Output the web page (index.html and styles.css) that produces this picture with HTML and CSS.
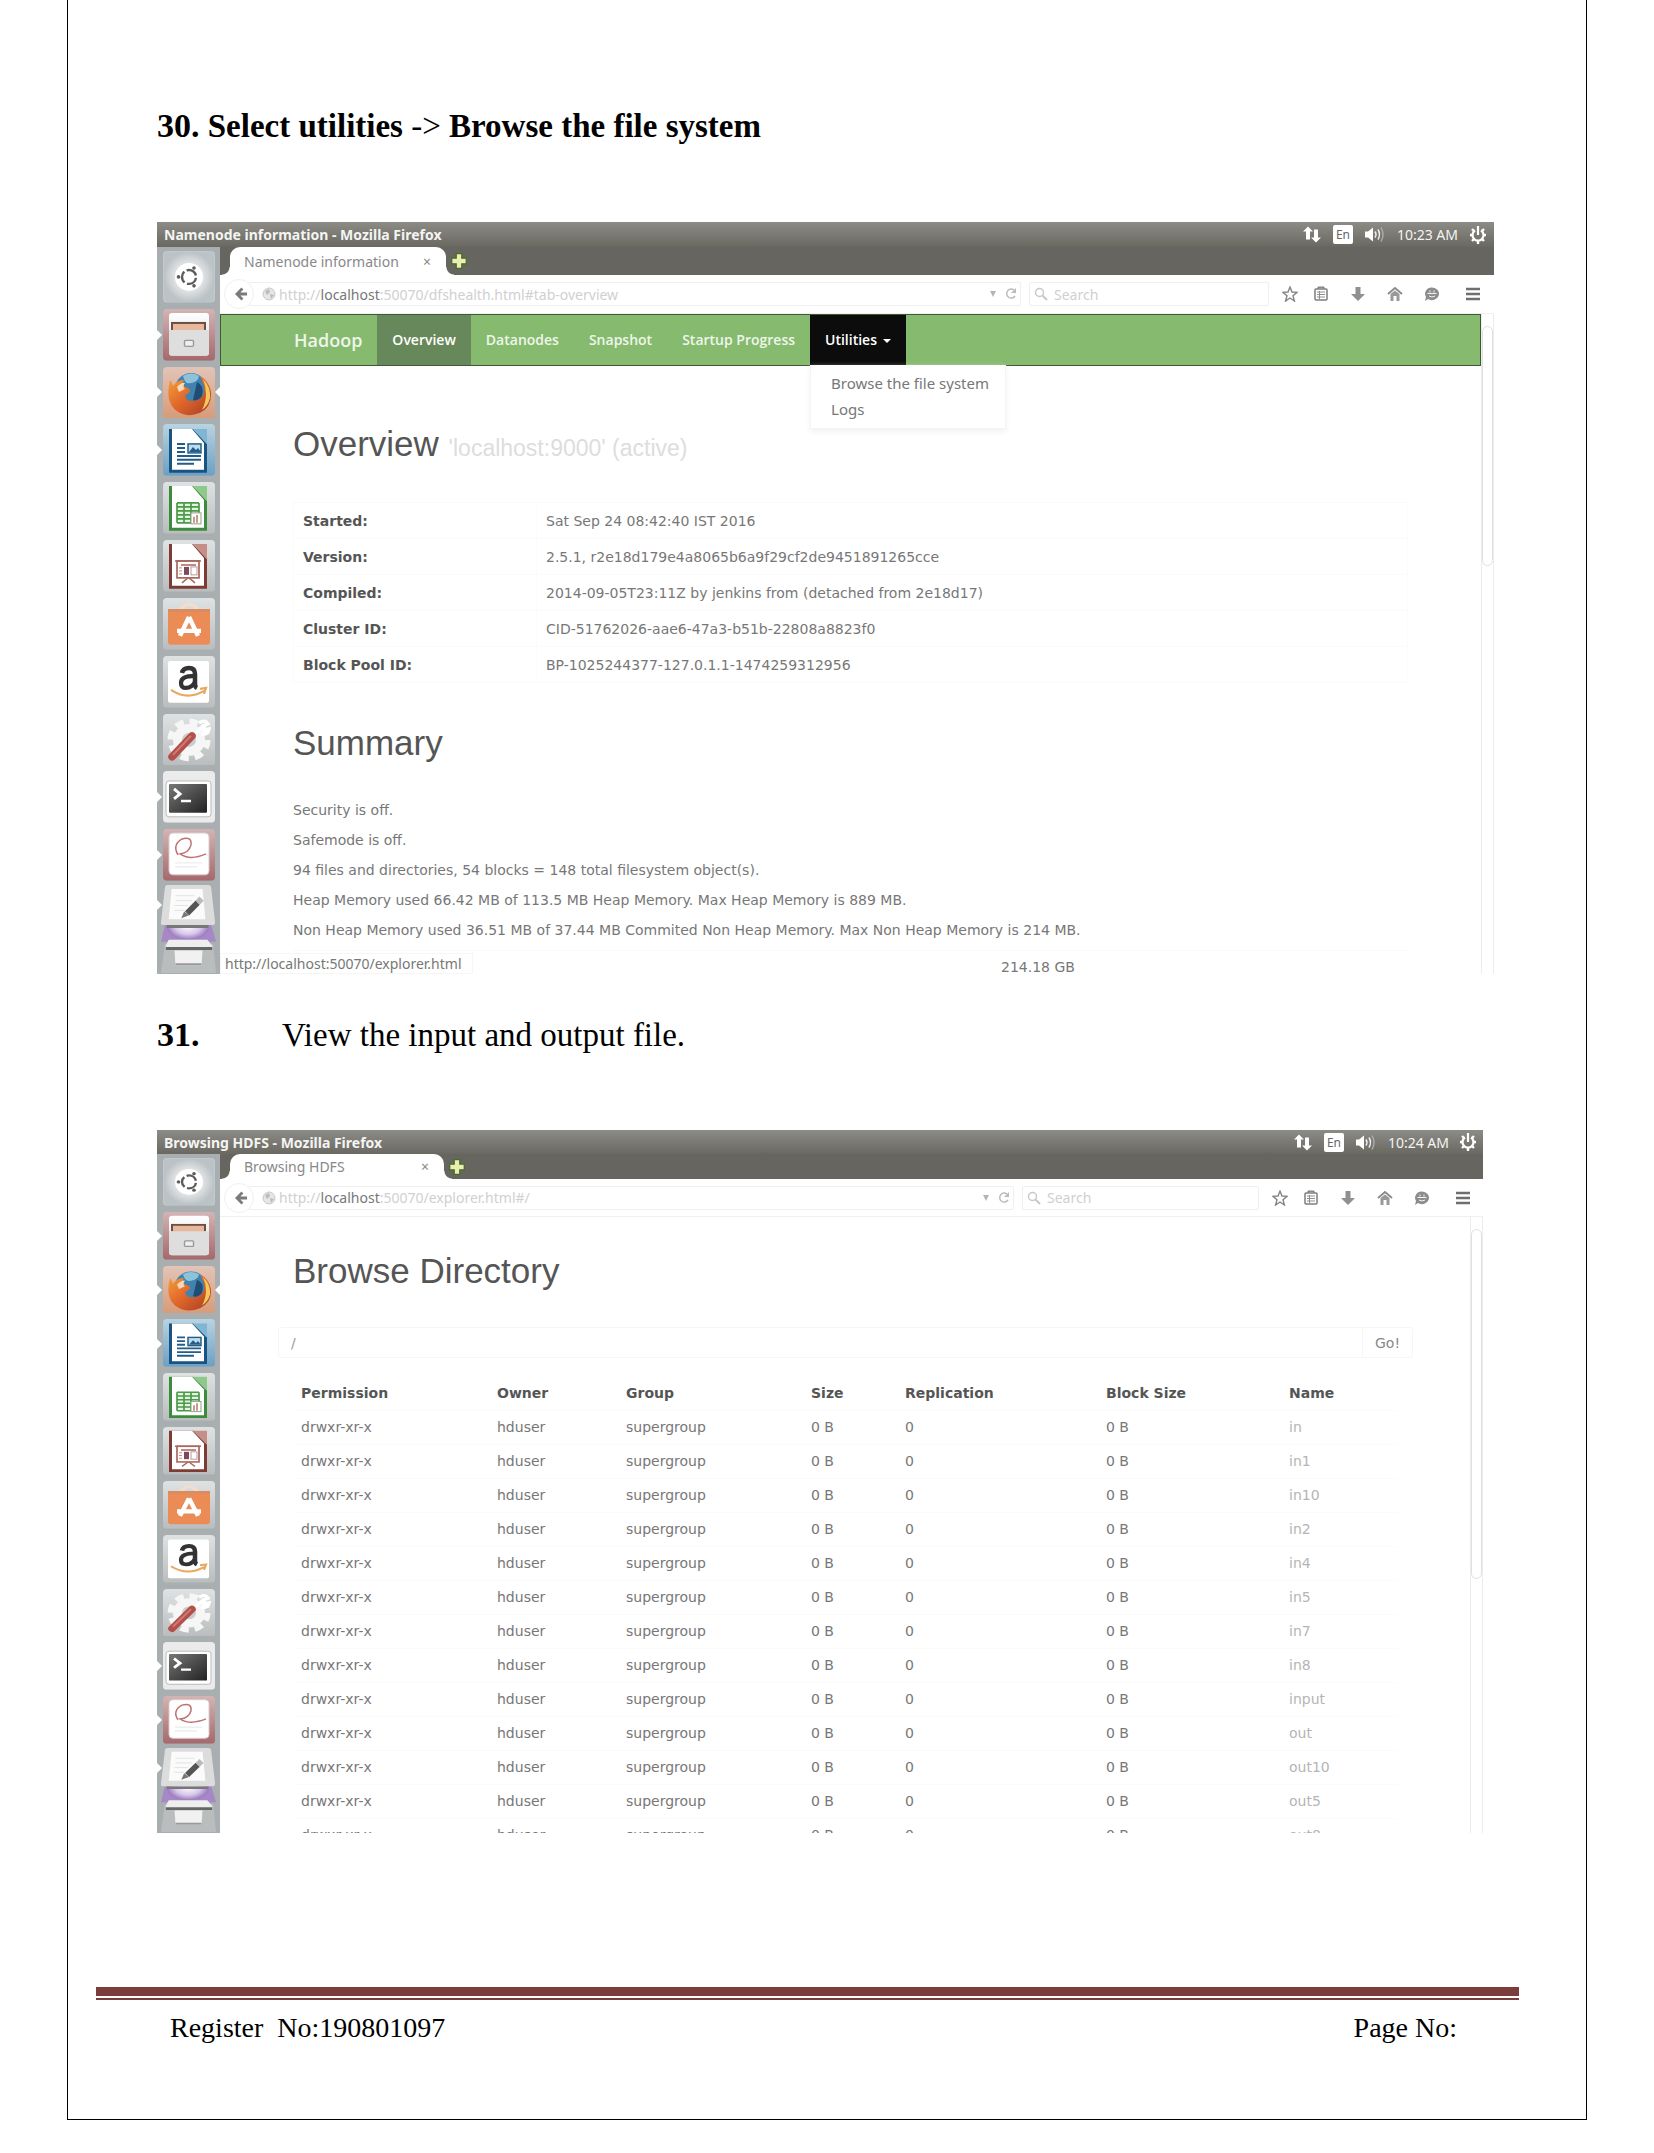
FILE: index.html
```html
<!DOCTYPE html>
<html lang="en">
<head>
<meta charset="utf-8">
<meta name="viewport" content="width=device-width, initial-scale=1">
<title>Hadoop lab record</title>
<link rel="stylesheet" href="styles.css">
</head>
<body>
<svg class="defs" aria-hidden="true">
  <defs>
    <linearGradient id="g-tile" x1="0" y1="0" x2="0" y2="1"><stop offset="0" stop-color="#dfe2e3"/><stop offset="1" stop-color="#b9bdbe"/></linearGradient>
    <radialGradient id="g-dash"><stop offset="0" stop-color="#ffffff"/><stop offset=".6" stop-color="#dde0e1"/><stop offset="1" stop-color="#bcc3c6"/></radialGradient>
    <linearGradient id="g-red" x1="0" y1="0" x2="0" y2="1"><stop offset="0" stop-color="#d3b4b4"/><stop offset="1" stop-color="#a5686b"/></linearGradient>
    <linearGradient id="g-fox" x1="0" y1="0" x2="0" y2="1"><stop offset="0" stop-color="#e2c4b8"/><stop offset="1" stop-color="#d79b78"/></linearGradient>
    <linearGradient id="g-body" x1="0" y1="0" x2="1" y2="1"><stop offset="0" stop-color="#f3a33c"/><stop offset=".45" stop-color="#e36a2c"/><stop offset="1" stop-color="#a63c24"/></linearGradient>
    <linearGradient id="g-blue" x1="0" y1="0" x2="0" y2="1"><stop offset="0" stop-color="#b9d3e0"/><stop offset="1" stop-color="#6ba0c4"/></linearGradient>
    <linearGradient id="g-paper" x1="0" y1="0" x2="0" y2="1"><stop offset="0" stop-color="#ffffff"/><stop offset="1" stop-color="#d6d6d6"/></linearGradient>
    <linearGradient id="g-term" x1="0" y1="0" x2="1" y2="1"><stop offset="0" stop-color="#777"/><stop offset="1" stop-color="#222"/></linearGradient>
    <radialGradient id="g-purple"><stop offset="0" stop-color="#ffffff"/><stop offset=".6" stop-color="#d8c8ea"/><stop offset="1" stop-color="#9a78bd"/></radialGradient>
  </defs>

  <symbol id="app-dash" viewBox="0 0 52 52" preserveAspectRatio="none">
    <rect width="52" height="52" rx="4" fill="#c2c9cc"/><rect x="1" y="1" width="50" height="50" rx="4" fill="url(#g-dash)"/>
    <circle cx="26" cy="26" r="14" fill="#fff"/>
    <circle cx="26" cy="26" r="7" fill="none" stroke="#5c5c5c" stroke-width="2.4" stroke-dasharray="12 2.66" stroke-dashoffset="-1"/>
    <circle cx="15.500" cy="26" r="1.800" fill="#5c5c5c"/><circle cx="31" cy="17" r="1.800" fill="#5c5c5c"/><circle cx="31" cy="35" r="1.800" fill="#5c5c5c"/>
  </symbol>
  <symbol id="app-files" viewBox="0 0 52 52" preserveAspectRatio="none">
    <rect width="52" height="52" rx="4" fill="url(#g-red)"/>
    <rect x="6" y="4" width="40" height="43" rx="3" fill="url(#g-paper)"/>
    <rect x="8" y="13" width="35" height="8" fill="#6b5045"/><rect x="10" y="15" width="31" height="7" fill="#e8b89c"/>
    <path d="M6 21h40v23q0 3-3 3H9q-3 0-3-3z" fill="#dedede"/>
    <rect x="21.500" y="31.500" width="9" height="6" rx="1" fill="#eee" stroke="#999" stroke-width="1.400"/>
  </symbol>
  <symbol id="app-firefox" viewBox="0 0 52 52" preserveAspectRatio="none">
    <rect width="52" height="52" rx="4" fill="url(#g-fox)"/>
    <circle cx="28" cy="22" r="16" fill="#3f83ae"/><path d="M20 9q8-5 16 0q-1 6-8 7q-6 2-8-7z" fill="#8dc3da"/>
    <path d="M34 15q8 4 5 14q-4 6-9 4z" fill="#214c73"/>
    <path d="M7 13q2 2 3 6q4-6 11-6q-3 4 1 7q5 1 5 4q-1 3-5 4q1 7 9 6q8-1 10-8q1-6-1-10q-2-5-3-7q9 5 11 16q1 15-11 21q-14 6-25-3Q2 34 7 13z" fill="url(#g-body)"/>
    <path d="M40 12q8 8 7 19q-2 8-8 12q4-8 4-16q0-8-3-15z" fill="#f4c95a"/>
    <path d="M14 20q5-5 8-4q-3 4 0 6l-6 3z" fill="#f7d9b8"/>
  </symbol>
  <symbol id="app-writer" viewBox="0 0 52 52" preserveAspectRatio="none">
    <rect width="52" height="52" rx="4" fill="url(#g-blue)"/>
    <path d="M6 5h24l14 15v29H6z" fill="#195382"/><path d="M30 5h14v15z" fill="#7fb6d3"/>
    <path d="M9 5h20l12 14v27H9z" fill="#fff"/>
    <path d="M14 20h8M14 24h8M14 28h8M14 32h24M14 36h24M14 40h17" stroke="#225d89" stroke-width="2"/>
    <rect x="25" y="20" width="13" height="9" fill="#bfdcec" stroke="#225d89" stroke-width="1.500"/><path d="M26 28l4-5 3 3 2-2 3 4z" fill="#225d89"/>
  </symbol>
  <symbol id="app-calc" viewBox="0 0 52 52" preserveAspectRatio="none">
    <rect width="52" height="52" rx="4" fill="url(#g-tile)"/>
    <path d="M6 4h24l14 15v30H6z" fill="#3d8b3c"/><path d="M30 4h14v15z" fill="#8fc98a"/>
    <path d="M9 4h20l12 14v28H9z" fill="#fff"/>
    <rect x="14" y="21" width="22" height="20" fill="#e4f3e1"/>
    <path d="M14 21h22M14 25h22M14 29h22M14 33h22M14 37h22M14 41h22M14 21v20M21 21v20M28 21v20M36 21v20" stroke="#4a9a48" stroke-width="1.700"/>
    <rect x="28" y="31" width="10" height="11" fill="#fff" stroke="#8aa587"/><path d="M31 41v-6M34 41v-8" stroke="#c59a8c" stroke-width="2"/>
  </symbol>
  <symbol id="app-impress" viewBox="0 0 52 52" preserveAspectRatio="none">
    <rect width="52" height="52" rx="4" fill="url(#g-tile)"/>
    <path d="M6 4h24l14 15v30H6z" fill="#7d3b33"/><path d="M30 4h14v15z" fill="#c58f87"/>
    <path d="M9 4h20l12 14v28H9z" fill="#fff"/>
    <rect x="14" y="21" width="22" height="17" fill="#fff" stroke="#a9675c" stroke-width="1.700"/>
    <path d="M12 21h26M18 25h15M25 38l-6 5M26 38l6 5" stroke="#a9675c" stroke-width="1.500"/>
    <rect x="21" y="27" width="5" height="8" fill="#7d4a5a"/><rect x="28" y="27" width="6" height="8" fill="none" stroke="#b99"/><path d="M16 28h3M16 31h3M16 34h3" stroke="#c88b7e"/>
  </symbol>
  <symbol id="app-software" viewBox="0 0 52 52" preserveAspectRatio="none">
    <rect width="52" height="52" rx="4" fill="url(#g-tile)"/>
    <path d="M17 12q9-12 18 0" fill="none" stroke="#f6dccb" stroke-width="3"/>
    <path d="M5 11h42v33q0 3-3 3H8q-3 0-3-3z" fill="#eb8c56"/><path d="M5 11h42v3H5z" fill="#d98c62"/>
    <path d="M26 19L17 38M26 19l9 19M14 33h24" stroke="#fff" stroke-width="4.500" fill="none"/>
  </symbol>
  <symbol id="app-amazon" viewBox="0 0 52 52" preserveAspectRatio="none">
    <rect width="52" height="52" rx="4" fill="url(#g-tile)"/>
    <rect x="5" y="5" width="41" height="42" rx="2" fill="#fff"/>
    <path d="M19 17q1-5 7-5q6 0 6 6v10q0 3 2 4" fill="none" stroke="#333" stroke-width="4.500"/>
    <path d="M32 20q-14 0-14 7q0 5 5 5q6 0 9-6" fill="none" stroke="#333" stroke-width="4.200"/>
    <path d="M8 34q16 11 33 1M37 33l6-1-2 6" fill="none" stroke="#e8a860" stroke-width="2.200"/>
  </symbol>
  <symbol id="app-settings" viewBox="0 0 52 52" preserveAspectRatio="none">
    <rect width="52" height="52" rx="4" fill="url(#g-tile)"/>
    <circle cx="26" cy="26" r="16" fill="#f6f6f6"/>
    <circle cx="26" cy="26" r="18.500" fill="none" stroke="#f6f6f6" stroke-width="6" stroke-dasharray="8.500 6.030"/>
    <circle cx="26" cy="26" r="7" fill="#c9cccd"/>
    <path d="M33 19l6-6M36 9q6-4 9 1l-5 2 1 4 5-1q-1 6-8 5" stroke="#fff" stroke-width="3.500" fill="none"/>
    <path d="M9 43L29 22" stroke="#b4504b" stroke-width="7.500" stroke-linecap="round"/><path d="M10 41L28 22" stroke="#cf7b76" stroke-width="2"/>
  </symbol>
  <symbol id="app-terminal" viewBox="0 0 52 52" preserveAspectRatio="none">
    <rect width="52" height="52" rx="4" fill="#ebebeb"/>
    <rect x="3" y="10" width="45" height="36" rx="3" fill="#fff" stroke="#b9b9b9"/>
    <rect x="6" y="13" width="38" height="29" rx="1" fill="url(#g-term)"/>
    <path d="M11 18l6 5-6 5" fill="none" stroke="#fff" stroke-width="3"/><path d="M18 30h10" stroke="#fff" stroke-width="2.500"/>
  </symbol>
  <symbol id="app-evince" viewBox="0 0 52 52" preserveAspectRatio="none">
    <rect width="52" height="52" rx="4" fill="url(#g-red)"/>
    <rect x="6" y="4" width="40" height="42" rx="4" fill="#fff" stroke="#d9cccc"/>
    <path d="M15 26q-6-10 4-16q10-3 9 6q-2 8-11 9q10 7 26 0" fill="none" stroke="#bf7370" stroke-width="1.500"/>
    <path d="M12 34h27M12 38h22" stroke="#eee" stroke-width="1.500"/>
  </symbol>
  <symbol id="app-stack" viewBox="0 0 58 92" preserveAspectRatio="none">
    <path d="M4 61h50l3 30H0z" fill="#b9bdbe"/>
    <path d="M14 68h29l-1 15H15z" fill="#f1f1f1"/><path d="M15 82h27" stroke="#999" stroke-width="2"/>
    <path d="M4 42h48l5 17H0z" fill="#a688c6"/>
    <ellipse cx="28" cy="43" rx="22" ry="14" fill="url(#g-purple)"/><path d="M6 42h43v3H6z" fill="#777"/>
    <path d="M8 57h40l5 6v3H5v-3z" fill="#eee"/><path d="M5 66h48" stroke="#666" stroke-width="3"/>
    <path d="M7 1h42q3 0 3 3l4 35q0 3-3 3H2q-3 0-2-3L4 4q0-3 3-3z" fill="#dcdcdc"/>
    <path d="M11 5h32l3 31H8z" fill="#fbfbfb"/><path d="M15 12h20M15 17h17M14 22h14M14 27h10" stroke="#e2e2e2"/>
    <path d="M27 30l11-11" stroke="#555" stroke-width="6"/><path d="M38 19l4-4" stroke="#bbb" stroke-width="6"/><path d="M21 35l3-7 5 4z" fill="#777"/>
  </symbol>

  <symbol id="ico-net" viewBox="0 0 18 16"><path d="M5 0L0 5h3v8h4V5h3zM13 16l5-5h-3V3h-4v8H8z" fill="#fff"/></symbol>
  <symbol id="ico-sound" viewBox="0 0 20 16"><path d="M0 5h3l5-4v14l-5-4H0z" fill="#fff"/><path d="M10 5q2 3 0 6M13 3q3 5 0 10" fill="none" stroke="#eee" stroke-width="1.500"/><path d="M16 1q4 7 0 14" fill="none" stroke="#aaa" stroke-width="1.500"/></symbol>
  <symbol id="ico-gear" viewBox="0 0 18 18"><path d="M6 4.500a5.500 5.500 0 1 0 6 0" fill="none" stroke="#fff" stroke-width="2.200"/><path d="M9 0v9" stroke="#fff" stroke-width="2.200"/><path d="M1 9h2M15 9h2M3 3l2 2M15 3l-2 2M3 15l2-2M15 15l-2-2M9 15v3" stroke="#fff" stroke-width="2.400"/></symbol>
  <symbol id="ico-plus" viewBox="0 0 16 16"><path d="M5.500 1.500h5v4h4v5h-4v4h-5v-4h-4v-5h4z" fill="#e9efae" stroke="#4b6b2c" stroke-width="1.200"/></symbol>
  <symbol id="ico-back" viewBox="0 0 14 14"><path d="M13 7H3M8 1L2 7l6 6" fill="none" stroke="#7a7a7a" stroke-width="3"/></symbol>
  <symbol id="ico-globe" viewBox="0 0 14 14"><circle cx="7" cy="7" r="6" fill="#e6e6e6" stroke="#c8c8c8"/><path d="M3 4l4-2 1 3-3 3zM8 7l4 1-3 4z" fill="#bbb"/></symbol>
  <symbol id="ico-reload" viewBox="0 0 12 14"><path d="M10 9a4.500 4.500 0 1 1-1-6" fill="none" stroke="#bbb" stroke-width="1.500"/><path d="M11 1v5H6z" fill="#bbb"/></symbol>
  <symbol id="ico-search" viewBox="0 0 14 14"><circle cx="5.500" cy="5.500" r="4" fill="none" stroke="#c8c8c8" stroke-width="1.500"/><path d="M8.500 8.500L13 13" stroke="#c8c8c8" stroke-width="2"/></symbol>
  <symbol id="ico-star" viewBox="0 0 16 16"><path d="M8 1l2 5 5 .4-4 3.400L12.400 15 8 12l-4.400 3L5 9.800 1 6.400 6 6z" fill="none" stroke="#858585" stroke-width="1.400"/></symbol>
  <symbol id="ico-clip" viewBox="0 0 16 16"><rect x="2" y="3" width="12" height="11" rx="1" fill="none" stroke="#7d7d7d" stroke-width="1.500"/><path d="M5 3V1h6v2" fill="#999" stroke="#7d7d7d"/><path d="M4 6h8M4 8.500h8M4 11h8M6.500 5v8" stroke="#8f8f8f"/></symbol>
  <symbol id="ico-down" viewBox="0 0 16 16"><path d="M5.500 1h5v7H15l-7 7-7-7h4.500z" fill="#909090"/></symbol>
  <symbol id="ico-home" viewBox="0 0 16 16"><path d="M1 8l7-6 7 6" fill="none" stroke="#8a8a8a" stroke-width="1.800"/><path d="M3.500 8L8 4.500 12.500 8v7h-3v-5h-3v5h-3z" fill="#999"/></symbol>
  <symbol id="ico-chat" viewBox="0 0 16 16"><path d="M8 1.500a7 6.300 0 1 1-4 11.500L1 15l1-4A6.500 6.300 0 0 1 8 1.500z" fill="#8c8c8c"/><path d="M3.500 7.500h9M6 4.500v2M10 4.500v2M5 10q3 2 6 0" stroke="#f4f4f4" fill="none"/></symbol>
  <symbol id="ico-menu" viewBox="0 0 16 16"><path d="M1 3h14M1 8h14M1 13h14" stroke="#6f6f6f" stroke-width="2.600"/></symbol>
</svg>

<main class="sheet">
  <h2 class="step"><span class="num">30.</span> Select utilities <span class="thin">-&gt;</span> Browse the file system</h2>

  <section class="shot shot-overview">
    <header class="titlebar">
      <span class="wintitle">Namenode information - Mozilla Firefox</span>
      <svg class="tray net"><use href="#ico-net"/></svg>
      <span class="lang">En</span>
      <svg class="tray sound"><use href="#ico-sound"/></svg>
      <span class="clock">10:23 AM</span>
      <svg class="tray gear"><use href="#ico-gear"/></svg>
    </header>
    <div class="desk">
      <nav class="launcher" aria-label="Launcher">
        <div class="app"><svg><use href="#app-dash"/></svg></div>
        <div class="app open"><svg><use href="#app-files"/></svg></div>
        <div class="app open focus"><svg><use href="#app-firefox"/></svg></div>
        <div class="app open"><svg><use href="#app-writer"/></svg></div>
        <div class="app"><svg><use href="#app-calc"/></svg></div>
        <div class="app"><svg><use href="#app-impress"/></svg></div>
        <div class="app"><svg><use href="#app-software"/></svg></div>
        <div class="app"><svg><use href="#app-amazon"/></svg></div>
        <div class="app"><svg><use href="#app-settings"/></svg></div>
        <div class="app open"><svg><use href="#app-terminal"/></svg></div>
        <div class="app open"><svg><use href="#app-evince"/></svg></div>
        <div class="stack open"><svg><use href="#app-stack"/></svg></div>
      </nav>
      <div class="browser">
        <div class="tabs">
          <div class="tab"><span>Namenode information</span><button class="close" aria-label="Close tab">×</button></div>
          <button class="newtab" aria-label="New tab"><svg><use href="#ico-plus"/></svg></button>
        </div>
        <div class="toolbar">
          <button class="back" aria-label="Back"><svg><use href="#ico-back"/></svg></button>
          <div class="url"><svg class="globe"><use href="#ico-globe"/></svg><span class="addr">http://<b>localhost</b>:50070/dfshealth.html#tab-overview</span><span class="tri"></span><svg class="reload"><use href="#ico-reload"/></svg></div>
          <label class="search"><svg><use href="#ico-search"/></svg><input type="text" placeholder="Search" aria-label="Search"></label>
          <div class="tools">
            <svg><use href="#ico-star"/></svg><svg class="clip"><use href="#ico-clip"/></svg><svg><use href="#ico-down"/></svg><svg><use href="#ico-home"/></svg><svg><use href="#ico-chat"/></svg><svg class="menu"><use href="#ico-menu"/></svg>
          </div>
        </div>
        <div class="view">
          <div class="page">
            <nav class="navbar">
              <a class="brand" href="#">Hadoop</a>
              <a class="active" href="#">Overview</a>
              <a href="#">Datanodes</a>
              <a href="#">Snapshot</a>
              <a href="#">Startup Progress</a>
              <div class="drop">
                <a class="toggle" href="#">Utilities <span class="caret"></span></a>
                <div class="dropmenu"><a href="#">Browse the file system</a><a href="#">Logs</a></div>
              </div>
            </nav>
            <div class="content">
              <h1>Overview <small>'localhost:9000' (active)</small></h1>
              <table class="info">
                <tr><th>Started:</th><td>Sat Sep 24 08:42:40 IST 2016</td></tr>
                <tr><th>Version:</th><td>2.5.1, r2e18d179e4a8065b6a9f29cf2de9451891265cce</td></tr>
                <tr><th>Compiled:</th><td>2014-09-05T23:11Z by jenkins from (detached from 2e18d17)</td></tr>
                <tr><th>Cluster ID:</th><td>CID-51762026-aae6-47a3-b51b-22808a8823f0</td></tr>
                <tr><th>Block Pool ID:</th><td>BP-1025244377-127.0.1.1-1474259312956</td></tr>
              </table>
              <h1>Summary</h1>
              <p>Security is off.</p>
              <p>Safemode is off.</p>
              <p>94 files and directories, 54 blocks = 148 total filesystem object(s).</p>
              <p>Heap Memory used 66.42 MB of 113.5 MB Heap Memory. Max Heap Memory is 889 MB.</p>
              <p>Non Heap Memory used 36.51 MB of 37.44 MB Commited Non Heap Memory. Max Non Heap Memory is 214 MB.</p>
              <div class="capacity"><span>214.18 GB</span></div>
            </div>
            <div class="status">http://localhost:50070/explorer.html</div>
          </div>
          <div class="scroll"><i></i></div>
        </div>
      </div>
    </div>
  </section>

  <h2 class="step second"><span class="num">31.</span><span class="plain">View the input and output file.</span></h2>

  <section class="shot shot-browse">
    <header class="titlebar">
      <span class="wintitle">Browsing HDFS - Mozilla Firefox</span>
      <svg class="tray net"><use href="#ico-net"/></svg>
      <span class="lang">En</span>
      <svg class="tray sound"><use href="#ico-sound"/></svg>
      <span class="clock">10:24 AM</span>
      <svg class="tray gear"><use href="#ico-gear"/></svg>
    </header>
    <div class="desk">
      <nav class="launcher" aria-label="Launcher">
        <div class="app"><svg><use href="#app-dash"/></svg></div>
        <div class="app open"><svg><use href="#app-files"/></svg></div>
        <div class="app open focus"><svg><use href="#app-firefox"/></svg></div>
        <div class="app open"><svg><use href="#app-writer"/></svg></div>
        <div class="app"><svg><use href="#app-calc"/></svg></div>
        <div class="app"><svg><use href="#app-impress"/></svg></div>
        <div class="app"><svg><use href="#app-software"/></svg></div>
        <div class="app"><svg><use href="#app-amazon"/></svg></div>
        <div class="app"><svg><use href="#app-settings"/></svg></div>
        <div class="app open"><svg><use href="#app-terminal"/></svg></div>
        <div class="app open"><svg><use href="#app-evince"/></svg></div>
        <div class="stack open"><svg><use href="#app-stack"/></svg></div>
      </nav>
      <div class="browser">
        <div class="tabs">
          <div class="tab"><span>Browsing HDFS</span><button class="close" aria-label="Close tab">×</button></div>
          <button class="newtab" aria-label="New tab"><svg><use href="#ico-plus"/></svg></button>
        </div>
        <div class="toolbar">
          <button class="back" aria-label="Back"><svg><use href="#ico-back"/></svg></button>
          <div class="url"><svg class="globe"><use href="#ico-globe"/></svg><span class="addr">http://<b>localhost</b>:50070/explorer.html#/</span><span class="tri"></span><svg class="reload"><use href="#ico-reload"/></svg></div>
          <label class="search"><svg><use href="#ico-search"/></svg><input type="text" placeholder="Search" aria-label="Search"></label>
          <div class="tools">
            <svg><use href="#ico-star"/></svg><svg class="clip"><use href="#ico-clip"/></svg><svg><use href="#ico-down"/></svg><svg><use href="#ico-home"/></svg><svg><use href="#ico-chat"/></svg><svg class="menu"><use href="#ico-menu"/></svg>
          </div>
        </div>
        <div class="view">
          <div class="page">
            <div class="content">
              <h1>Browse Directory</h1>
              <form class="path"><input type="text" value="/" aria-label="Directory"><button type="button">Go!</button></form>
              <div class="crop">
              <table class="files">
                <thead><tr><th class="c1">Permission</th><th class="c2">Owner</th><th class="c3">Group</th><th class="c4">Size</th><th class="c5">Replication</th><th class="c6">Block Size</th><th>Name</th></tr></thead>
                <tbody>
                <tr><td>drwxr-xr-x</td><td>hduser</td><td>supergroup</td><td>0 B</td><td>0</td><td>0 B</td><td><a href="#">in</a></td></tr>
                <tr><td>drwxr-xr-x</td><td>hduser</td><td>supergroup</td><td>0 B</td><td>0</td><td>0 B</td><td><a href="#">in1</a></td></tr>
                <tr><td>drwxr-xr-x</td><td>hduser</td><td>supergroup</td><td>0 B</td><td>0</td><td>0 B</td><td><a href="#">in10</a></td></tr>
                <tr><td>drwxr-xr-x</td><td>hduser</td><td>supergroup</td><td>0 B</td><td>0</td><td>0 B</td><td><a href="#">in2</a></td></tr>
                <tr><td>drwxr-xr-x</td><td>hduser</td><td>supergroup</td><td>0 B</td><td>0</td><td>0 B</td><td><a href="#">in4</a></td></tr>
                <tr><td>drwxr-xr-x</td><td>hduser</td><td>supergroup</td><td>0 B</td><td>0</td><td>0 B</td><td><a href="#">in5</a></td></tr>
                <tr><td>drwxr-xr-x</td><td>hduser</td><td>supergroup</td><td>0 B</td><td>0</td><td>0 B</td><td><a href="#">in7</a></td></tr>
                <tr><td>drwxr-xr-x</td><td>hduser</td><td>supergroup</td><td>0 B</td><td>0</td><td>0 B</td><td><a href="#">in8</a></td></tr>
                <tr><td>drwxr-xr-x</td><td>hduser</td><td>supergroup</td><td>0 B</td><td>0</td><td>0 B</td><td><a href="#">input</a></td></tr>
                <tr><td>drwxr-xr-x</td><td>hduser</td><td>supergroup</td><td>0 B</td><td>0</td><td>0 B</td><td><a href="#">out</a></td></tr>
                <tr><td>drwxr-xr-x</td><td>hduser</td><td>supergroup</td><td>0 B</td><td>0</td><td>0 B</td><td><a href="#">out10</a></td></tr>
                <tr><td>drwxr-xr-x</td><td>hduser</td><td>supergroup</td><td>0 B</td><td>0</td><td>0 B</td><td><a href="#">out5</a></td></tr>
                <tr><td>drwxr-xr-x</td><td>hduser</td><td>supergroup</td><td>0 B</td><td>0</td><td>0 B</td><td><a href="#">out8</a></td></tr>
                </tbody>
              </table>
              </div>
            </div>
          </div>
          <div class="scroll"><i></i></div>
        </div>
      </div>
    </div>
  </section>

  <footer class="foot">
    <span>Register&nbsp; No:190801097</span><span>Page No:</span>
  </footer>
</main>
</body>
</html>
```
FILE: styles.css
```css
* { box-sizing: border-box; }
body { margin: 0; background: #fff; color: #000; font-family: "Liberation Serif", serif; }
svg { display: block; }
a { color: inherit; text-decoration: none; }
button { border: 0; background: none; padding: 0; font: inherit; color: inherit; }
.defs { position: absolute; width: 0; height: 0; }

.sheet { margin: 0 67px 33px; padding-top: 106px; border: 1px solid #000; border-top: 0; }

.step { margin: 0 89px; font-size: 33px; line-height: 40px; font-weight: 700; }
.step .num { font-size: 34px; }
.step .thin, .step .plain { font-weight: 400; }
.step.second { margin-top: 41px; display: flex; align-items: baseline; }
.second .num { width: 125px; }

/* screen figures */
.shot { margin: 76px 92px 0 89px; background: #fff; font-family: "DejaVu Sans", sans-serif; font-size: 14px; overflow: hidden; }
.shot-browse { margin-top: 75px; margin-right: 103px; }
.titlebar { height: 25px; display: flex; align-items: center; padding: 0 7px; background: linear-gradient(#8c8b85, #696861); color: #f4f4f2; font-family: "Noto Sans", sans-serif; font-size: 14px; }
.wintitle { flex: 1; font-weight: 700; }
.tray.net { width: 18px; height: 17px; margin-right: 12px; }
.lang { width: 20px; height: 19px; margin-right: 12px; border-radius: 2px; background: #fff; color: #666; font-size: 12px; line-height: 19px; text-align: center; }
.tray.sound { width: 20px; height: 17px; margin-right: 12px; }
.tray.gear { width: 18px; height: 18px; margin-left: 11px; }
.desk { display: flex; }

.launcher { width: 63px; flex: none; display: flex; flex-direction: column; gap: 6px; padding-top: 4px; background: #a9aeb0; }
.app { position: relative; flex: 1; margin: 0 5px 0 6px; min-height: 40px; }
.app svg { position: absolute; width: 100%; height: 100%; }
.stack { position: relative; height: 90px; margin: 0 3px 0 4px; margin-top: -3px; }
.stack svg { position: absolute; width: 100%; height: 100%; }
.open::before { content: ""; position: absolute; left: -6px; top: 40%; border: 5px solid transparent; border-left-color: #fff; border-right: 0; }
.stack.open::before { left: -4px; top: 16px; }
.focus::after { content: ""; position: absolute; right: -5px; top: 40%; border: 5px solid transparent; border-right-color: #fff; border-left: 0; }

.browser { flex: 1; min-width: 0; display: flex; flex-direction: column; }
.tabs { height: 28px; display: flex; background: #66655f; }
.tab { width: 216px; margin-left: 10px; padding: 0 15px 0 14px; display: flex; align-items: center; justify-content: space-between; background: #fff; border-radius: 10px 10px 0 0; color: #888; font-family: "Noto Sans", sans-serif; font-size: 14px; position: relative; height: 28px; }
.tab::before, .tab::after { content: ""; position: absolute; bottom: 0; width: 8px; height: 8px; }
.tab::before { left: -8px; background: radial-gradient(circle at 0 0, transparent 7px, #fff 8px); }
.tab::after { right: -8px; background: radial-gradient(circle at 100% 0, transparent 7px, #fff 8px); }
.newtab { margin-left: 4px; display: flex; align-items: center; position: relative; }
.newtab svg { width: 18px; height: 18px; }

.toolbar { height: 39px; display: flex; align-items: center; padding: 0 13px 0 4px; border-bottom: 1px solid #f0f0f0; font-family: "Noto Sans", sans-serif; font-size: 14px; }
.back { width: 30px; height: 30px; margin-right: -6px; padding-left: 10px; border: 1px solid #f0f0f0; border-radius: 50%; background: #fff; position: relative; }
.back svg { width: 13px; height: 14px; }
.url { flex: 1; min-width: 0; height: 24px; display: flex; align-items: center; padding: 0 3px 0 13px; border: 1px solid #efefef; border-radius: 2px; color: #d0d0d0; }
.globe { width: 14px; height: 14px; margin-right: 3px; }
.addr { flex: 1; }
.addr b { font-weight: 400; color: #777; }
.tri { border: 3px solid transparent; border-top: 6px solid #b5b5b5; border-bottom: 0; margin-right: 9px; }
.reload { width: 12px; height: 14px; }
.search { width: 240px; height: 24px; margin-left: 8px; display: flex; align-items: center; gap: 6px; padding: 0 4px; border: 1px solid #efefef; border-radius: 2px; }
.search svg { width: 14px; height: 14px; flex: none; }
.search input { width: 100%; border: 0; padding: 0; font: inherit; background: none; }
.search input::placeholder { color: #d0d0d0; opacity: 1; }
.tools { display: flex; gap: 21px; margin-left: 13px; }
.tools svg { width: 16px; height: 16px; }
.tools .clip { margin-left: -6px; }
.tools .menu { margin-left: 4px; }

.view { flex: 1; display: flex; }
.page { flex: 1; min-width: 0; position: relative; }
.scroll { width: 13px; padding-top: 12px; border: solid #ececec; border-width: 0 1px; }
.scroll i { display: block; height: 37%; border: 1px solid #e0e0e0; border-radius: 6px; }
.shot-browse .scroll i { height: 58%; }

.navbar { height: 52px; display: flex; padding-left: 58px; background: #86ba6f; border: 1px solid #3c5a34; color: #eef6ea; font-family: "Open Sans", sans-serif; font-size: 14px; font-weight: 600; line-height: 50px; }
.navbar > a { padding: 0 15px; }
.navbar .brand { font-size: 18px; }
.navbar .active { background: #67885a; color: #fff; }
.drop { position: relative; }
.toggle { display: block; height: 50px; padding: 0 15px; background: #0c0c0c; color: #fff; }
.caret { display: inline-block; margin-left: 2px; vertical-align: 2px; border: 4px solid transparent; border-top-color: #fff; border-bottom: 0; }
.dropmenu { position: absolute; left: 0; top: 50px; width: 196px; padding: 5px 0 6px; background: #fff; border: 1px solid #f4f4f4; border-top: 0; box-shadow: 0 3px 6px #f2f2f2; color: #777; font: 15px/26px "Noto Sans", sans-serif; }
.dropmenu a { display: block; padding-left: 20px; }

.content { padding: 58px 73px 0; color: #777; }
h1 { margin: 0; font: 400 35px/40px "Liberation Sans", sans-serif; color: #555; }
h1 small { font-size: 23px; color: #ddd; }
.info { width: 100%; margin: 34px 0 40px; border-collapse: collapse; table-layout: fixed; }
.info th, .info td { height: 36px; padding: 0 9px; text-align: left; border: 1px solid #fbfbfb; }
.info th { width: 243px; color: #555; }
.content p { margin: 0; line-height: 30px; }
.content h1 ~ h1 { margin-bottom: 32px; }
.capacity { display: flex; height: 24px; margin-top: 5px; border-top: 1px solid #fafafa; line-height: 32px; padding-left: 708px; overflow: hidden; }
.status { position: absolute; left: 0; bottom: 0; width: 253px; height: 21px; padding-left: 4px; background: #fff; border: 1px solid #f6f6f6; font: 14px/19px "Noto Sans", sans-serif; color: #777; }

/* second window */
.shot-browse .titlebar { height: 24px; padding-right: 6px; }
.shot-browse .tray.gear { margin-left: 10px; }
.shot-browse .stack { height: 86px; }
.shot-browse .tabs { height: 25px; }
.shot-browse .tab { height: 25px; width: 214px; }
.shot-browse .toolbar { height: 38px; padding-right: 12px; }
.shot-browse .search { width: 237px; }
.shot-browse .content { padding-top: 34px; }
.path { display: flex; height: 31px; margin: 36px -16px 18px -15px; border: 1px solid #f6f6f6; border-radius: 3px; }
.path input { flex: 1; border: 0; padding: 0 12px; font: inherit; color: #999; background: none; }
.path button { width: 50px; border-left: 1px solid #f6f6f6; color: #888; }
.crop { height: 457px; overflow: hidden; }
.files { width: 100%; border-collapse: collapse; table-layout: fixed; }
.files th, .files td { height: 34px; padding: 0 8px; text-align: left; border-bottom: 1px solid #fbfbfb; }
.files th { color: #555; }
.files a { color: #b5b5b5; }
.c1 { width: 196px; }
.c2 { width: 129px; }
.c3 { width: 185px; }
.c4 { width: 94px; }
.c5 { width: 201px; }
.c6 { width: 183px; }

.foot { margin: 154px 67px 0 28px; padding: 10px 62px 73px 74px; display: flex; justify-content: space-between; font-size: 28px; line-height: 36px; border-top: 13px solid; border-image: linear-gradient(#7a3d3b 9px, #fff 9px, #fff 11px, #7a3d3b 11px) 13 0 0 0; }
```
